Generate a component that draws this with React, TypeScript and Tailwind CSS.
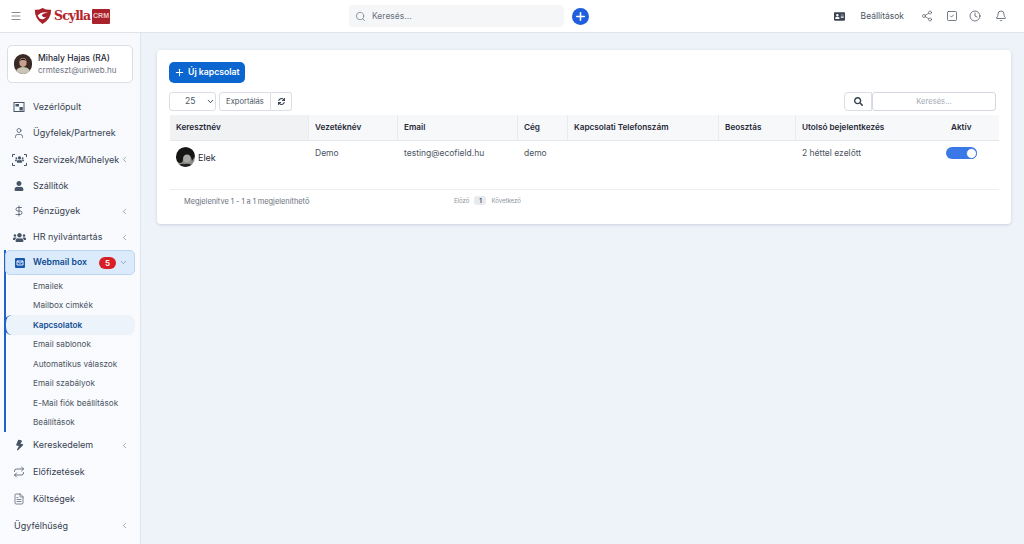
import { Menu, Search, Plus, Share2, SquareCheck, Clock, Bell, User, ChevronLeft, ChevronDown, DollarSign, Repeat, FileText } from 'lucide-react';
import { FaAddressCard, FaBolt, FaUser, FaUsers, FaSearch, FaSync } from 'react-icons/fa';

function Logo() {
  return (
    <div className="flex items-center">
      <svg width="18" height="18" viewBox="0 0 20 19">
        <path d="M1 2.5 Q5 3 9.5 0.5 Q14 3 19 2.5 Q19.5 12 9.5 18.5 Q0.5 12 1 2.5Z" fill="#a8212b" />
        <path d="M4 9 Q9 3.5 16 6 Q11 5.5 8.5 9 Q11 12 14 10 Q10 15 6 12Z" fill="#fff" />
        <circle cx="11" cy="8.5" r="1.6" fill="#a8212b" />
      </svg>
      <span className="ml-[2px] w-[38px] text-[12.5px] leading-none font-bold text-[#b3232d] font-['DejaVu_Serif',serif] tracking-[-0.9px] whitespace-nowrap">Scylla</span>
      <span className="mt-[1px] w-[18px] h-[15px] flex items-center justify-center text-[7px] font-black text-[#ecc7c7] bg-[#a8212b] rounded-[1px] font-['Liberation_Sans',sans-serif]">CRM</span>
    </div>
  );
}

function Topbar() {
  return (
    <header className="h-[33px] shrink-0 flex items-center bg-white border-b border-[#dfe4ea] text-[#475569]">
      <div className="w-[349px] shrink-0 flex items-center pl-[10px]">
        <Menu size={12} strokeWidth={1.6} className="text-[#6b7280]" />
        <div className="ml-[12px]"><Logo /></div>
      </div>
      <div className="w-[215px] h-[22px] shrink-0 flex items-center pl-[6px] gap-[6px] rounded-[4px] bg-[#f5f6f8] text-[8.5px] text-[#6b7280]">
        <Search size={11} strokeWidth={1.8} className="text-[#7b8490]" />
        <span>Keresés...</span>
      </div>
      <div className="ml-[8px] w-[17px] h-[17px] rounded-full bg-[#1d5fdc] flex items-center justify-center">
        <Plus size={13} strokeWidth={3} className="text-white" />
      </div>
      <div className="ml-auto flex items-center pr-[17px]">
        <FaAddressCard size={11} className="text-[#3b4452] mr-[16px]" />
        <span className="text-[8.5px] text-[#4b5563] mr-[17px]">Beállítások</span>
        <Share2 size={12} strokeWidth={1.3} className="text-[#4b5563] mr-[13px]" />
        <SquareCheck size={12} strokeWidth={1.4} className="text-[#374151] mr-[11px]" />
        <Clock size={12} strokeWidth={1.4} className="text-[#374151] mr-[14px]" />
        <Bell size={12} strokeWidth={1.4} className="text-[#374151]" />
      </div>
    </header>
  );
}

function DashIcon() {
  return (
    <svg width="12" height="12" viewBox="0 0 12 12" fill="none" stroke="#475569">
      <rect x="1" y="1.5" width="10" height="9" strokeWidth="1" />
      <rect x="2.5" y="3" width="3.5" height="2.5" fill="#475569" stroke="none" />
      <path d="M6.5 9.5 L9.8 9.5 L9.8 6 L6.5 6Z" fill="#475569" stroke="none" />
    </svg>
  );
}

function ScanUsersIcon() {
  return (
    <div className="relative w-[15px] h-[12px] flex items-center justify-center text-[#475569]">
      <svg width="15" height="12" viewBox="0 0 15 12" fill="none" stroke="#475569" strokeWidth="1" className="absolute inset-0">
        <path d="M0.5 3V0.5H3M12 0.5H14.5V3M0.5 9V11.5H3M12 11.5H14.5V9" />
      </svg>
      <FaUsers size={9} />
    </div>
  );
}

function MailIcon() {
  return (
    <svg width="12" height="12" viewBox="0 0 12 12">
      <rect x="1" y="1" width="10" height="10" rx="1" fill="#1558b0" />
      <path d="M3 4 L6 6.3 L9 4 M3 4 H9 V8 H3Z" fill="none" stroke="#fff" strokeWidth="0.9" />
    </svg>
  );
}

function NavItem({ icon, label, h, chevron }: { icon?: React.ReactNode; label: string; h: string; chevron?: boolean }) {
  return (
    <div className={`${h} flex items-center text-[9px] text-[#374151]`}>
      {icon ? <div className="w-[20px] ml-[9px] mr-[4px] flex justify-center text-[#475569]">{icon}</div> : <div className="w-[14px]" />}
      <span className="whitespace-nowrap">{label}</span>
      {chevron && <ChevronLeft size={9} strokeWidth={1.6} className="ml-auto mr-[11px] text-[#6b7280]" />}
    </div>
  );
}

const subItems = ['Emailek', 'Mailbox cimkék', 'Kapcsolatok', 'Email sablonok', 'Automatikus válaszok', 'Email szabályok', 'E-Mail fiók beállítások', 'Beállítások'];

function Sidebar() {
  return (
    <aside className="w-[141px] shrink-0 border-r border-[#dfe4ea] bg-gradient-to-b from-[#f7f9fc] to-[#fafbfe] flex flex-col px-0 pt-[12px] overflow-hidden">
      <div className="mx-[7px] h-[38px] rounded-[5px] border border-[#d9dee5] bg-white flex items-center pl-[6px] gap-[6px]">
        <svg width="18" height="20" viewBox="0 0 18 20" className="rounded-full">
          <rect width="18" height="20" fill="#3a2a25" />
          <path d="M1 20 Q2 13 9 13 Q16 13 17 20Z" fill="#c9c5b4" />
          <ellipse cx="9" cy="8.5" rx="3.6" ry="4.4" fill="#c9a08d" />
          <path d="M5 7 Q9 2 13 7 Q9 5 5 7Z" fill="#221814" />
        </svg>
        <div className="flex flex-col leading-[12px]">
          <span className="text-[8.5px] font-medium text-[#1f2937]">Mihaly Hajas (RA)</span>
          <span className="text-[8px] text-[#6b7280]">crmteszt@uriweb.hu</span>
        </div>
      </div>
      <div className="h-[11px]" />
      <NavItem h="h-[26px]" icon={<DashIcon />} label="Vezérlőpult" />
      <NavItem h="h-[26px]" icon={<User size={12} strokeWidth={1.5} />} label="Ügyfelek/Partnerek" />
      <div className="h-[27px] flex items-center text-[9px] text-[#374151]">
        <div className="w-[20px] ml-[9px] mr-[4px] flex justify-center"><ScanUsersIcon /></div>
        <span className="whitespace-nowrap">Szervizek/Műhelyek</span>
        <ChevronLeft size={9} strokeWidth={1.6} className="ml-auto mr-[11px] text-[#6b7280]" />
      </div>
      <NavItem h="h-[25px]" icon={<FaUser size={10} />} label="Szállítók" />
      <NavItem h="h-[26px]" icon={<DollarSign size={12} strokeWidth={1.6} />} label="Pénzügyek" chevron />
      <NavItem h="h-[26px]" icon={<FaUsers size={13} />} label="HR nyilvántartás" chevron />

      <div className="ml-[4px] border-l-[2px] border-[#1d63c9]">
        <div className="-ml-[1px] mr-[5px] h-[25px] rounded-[5px] bg-[#dcebfb] border border-[#bcd6f2] flex items-center text-[8.7px] font-semibold text-[#0f4c92]">
          <div className="w-[15px] ml-[6px] mr-[6px] flex justify-center"><MailIcon /></div>
          <span>Webmail box</span>
          <span className="ml-auto w-[17px] h-[12px] rounded-full bg-[#d81f26] text-white text-[8px] font-semibold flex items-center justify-center">5</span>
          <ChevronDown size={9} strokeWidth={1.6} className="ml-[3px] mr-[6px] text-[#64748b]" />
        </div>
        <div className="pt-[1px]">
          {subItems.map((item) =>
            item === 'Kapcsolatok' ? (
              <div key={item} className="-ml-[2px] mr-[5px] h-[20px] flex items-center pl-[27px] text-[8.2px] font-semibold text-[#0f4c92] bg-[#edf3fa] rounded-[8px] border-l-[2px] border-[#1d63c9]">{item}</div>
            ) : (
              <div key={item} className="h-[19.4px] flex items-center pl-[27px] text-[8.2px] text-[#4b5563] whitespace-nowrap">{item}</div>
            )
          )}
        </div>
      </div>

      <NavItem h="h-[27px]" icon={<FaBolt size={11} className="rotate-[15deg]" />} label="Kereskedelem" chevron />
      <NavItem h="h-[26px]" icon={<Repeat size={12} strokeWidth={1.6} />} label="Előfizetések" />
      <NavItem h="h-[28px]" icon={<FileText size={12} strokeWidth={1.4} />} label="Költségek" />
      <NavItem h="h-[26px]" label="Ügyfélhűség" chevron />
    </aside>
  );
}

const columns = [
  { label: 'Keresztnév', w: 'w-[139px]', bg: 'bg-[#f0f2f4]' },
  { label: 'Vezetéknév', w: 'w-[89px]', bg: 'bg-[#f7f8fa]' },
  { label: 'Email', w: 'w-[120px]', bg: 'bg-[#f7f8fa]' },
  { label: 'Cég', w: 'w-[50px]', bg: 'bg-[#f7f8fa]' },
  { label: 'Kapcsolati Telefonszám', w: 'w-[151px]', bg: 'bg-[#f7f8fa]' },
  { label: 'Beosztás', w: 'w-[77px]', bg: 'bg-[#f7f8fa]' },
  { label: 'Utolsó bejelentkezés', w: 'w-[149px]', bg: 'bg-[#f7f8fa]' },
  { label: 'Aktív', w: 'w-[54px]', bg: 'bg-[#f7f8fa]' },
];

function ElekAvatar() {
  return (
    <svg width="19" height="20" viewBox="0 0 19 20" className="rounded-full shrink-0">
      <rect width="19" height="20" fill="#8d8d8a" />
      <path d="M0 10 Q1 0 10 0 Q19 1 19 9 L16 14 Q15 7 10 8 Q7 9 7 12 Q7 16 4 16 Q0 15 0 10Z" fill="#161616" />
      <ellipse cx="11" cy="11.5" rx="3.6" ry="4" fill="#a8a8a4" />
      <path d="M2 20 Q4 16 9 17 Q15 16 17 20Z" fill="#222" />
    </svg>
  );
}

function Card() {
  return (
    <div className="w-[854px] h-[174px] rounded-[4px] bg-white shadow-[0_1px_3px_rgba(100,116,139,0.25)] pl-[13px] pr-[12px] pt-[12px]">
      <button className="-ml-[1px] h-[21px] w-[76px] rounded-[5px] bg-[#0b66d0] text-white text-[8.7px] font-semibold flex items-center pl-[5px] gap-[3px]">
        <Plus size={11} strokeWidth={2.2} />
        Új kapcsolat
      </button>

      <div className="mt-[9px] h-[23px] flex items-start justify-between pr-[3px]">
        <div className="flex">
          <div className="-ml-[1px] w-[47px] h-[19px] rounded-[3px] border border-[#dbdfe5] flex items-center text-[8.5px] text-[#4b5563]">
            <span className="ml-[15px]">25</span>
            <ChevronDown size={9} strokeWidth={2.6} className="ml-auto text-[#374151]" />
          </div>
          <div className="ml-[3px] h-[19px] w-[52px] rounded-l-[3px] border border-[#dbdfe5] flex items-center justify-center text-[7.6px] text-[#4b5563]">Exportálás</div>
          <div className="h-[19px] w-[21px] rounded-r-[3px] border border-l-0 border-[#dbdfe5] flex items-center justify-center">
            <FaSync size={7} className="text-[#374151]" />
          </div>
        </div>
        <div className="flex">
          <div className="w-[28px] h-[19px] rounded-l-[4px] border border-[#dbdfe5] flex items-center justify-center">
            <FaSearch size={9} className="text-[#374151]" />
          </div>
          <div className="w-[124px] h-[19px] rounded-[3px] border border-[#d5d9df] flex items-center justify-center text-[7.6px] text-[#a3a9b3]">Keresés...</div>
        </div>
      </div>

      <div className="flex h-[26px] border-b border-[#e3e6ea]">
        {columns.map((c, i) => (
          <div key={c.label} className={`${c.w} ${c.bg} ${i < 6 ? 'border-r border-[#e9ebef]' : ''} shrink-0 flex items-center pl-[6px] text-[8.2px] font-semibold text-[#1f2937] whitespace-nowrap`}>
            {c.label}
          </div>
        ))}
      </div>

      <div className="flex h-[49px] border-b border-[#eceef1] text-[8.5px] text-[#4b5563]">
        <div className="w-[139px] shrink-0 pl-[6px] pt-[6px] flex items-start gap-[3px] text-[#1f2937]">
          <ElekAvatar />
          <span className="text-[9px] mt-[4px]">Elek</span>
        </div>
        <div className="w-[89px] shrink-0 pl-[6px] pt-[6px]">Demo</div>
        <div className="w-[120px] shrink-0 pl-[6px] pt-[6px]">testing@ecofield.hu</div>
        <div className="w-[50px] shrink-0 pl-[6px] pt-[6px]">demo</div>
        <div className="w-[151px] shrink-0" />
        <div className="w-[77px] shrink-0" />
        <div className="w-[149px] shrink-0 pl-[6px] pt-[6px]">2 héttel ezelőtt</div>
        <div className="w-[54px] shrink-0 pt-[6px] pl-[1px]">
          <div className="w-[31px] h-[12px] rounded-full bg-[#3b78e7] flex items-center justify-end pr-[0.5px]">
            <div className="w-[11px] h-[11px] rounded-full bg-white border border-[#3b78e7]" />
          </div>
        </div>
      </div>

      <div className="flex items-center h-[20px] text-[7.4px] text-[#6b7280]">
        <span className="ml-[14px] w-[270px] mt-[4px]">Megjelenítve 1 - 1 a 1 megjeleníthető</span>
        <span className="text-[6px] text-[#8b929c]">Előző</span>
        <span className="ml-[5px] w-[12px] h-[9px] rounded-[3px] bg-[#e8eaed] flex items-center justify-center text-[6px] font-semibold text-[#374151]">1</span>
        <span className="ml-[5px] text-[6px] text-[#8b929c]">Következő</span>
      </div>
    </div>
  );
}

export default function App() {
  return (
    <div className="w-[1024px] h-[544px] flex flex-col overflow-hidden bg-[#eef2f9] font-['Inter',sans-serif]">
      <Topbar />
      <div className="flex flex-1 min-h-0">
        <Sidebar />
        <main className="flex-1 pl-[16px] pt-[17px]">
          <Card />
        </main>
      </div>
    </div>
  );
}
